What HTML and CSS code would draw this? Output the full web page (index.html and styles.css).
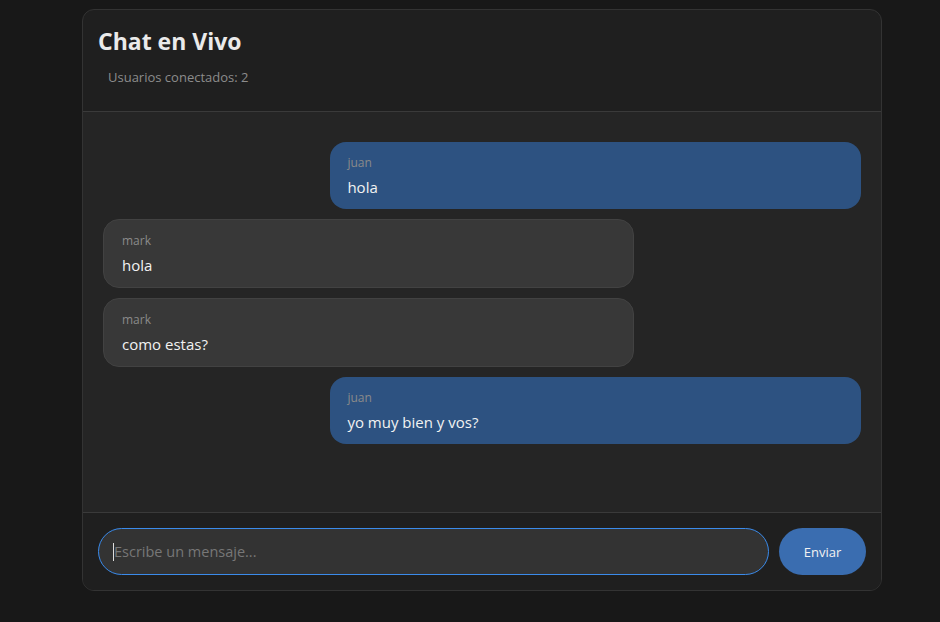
FILE: index.html
```html
<!DOCTYPE html>
<html lang="es">
<head>
<meta charset="utf-8">
<title>Chat en Vivo</title>
<link rel="stylesheet" href="styles.css">
</head>
<body>
<div class="chat">
  <header class="chat-header">
    <h2 class="chat-title">Chat en Vivo</h2>
    <div class="chat-users">Usuarios conectados: 2</div>
  </header>
  <main class="messages">
    <div class="msg own"><div class="msg-user">juan</div><div class="msg-text">hola</div></div>
    <div class="msg other"><div class="msg-user">mark</div><div class="msg-text">hola</div></div>
    <div class="msg other"><div class="msg-user">mark</div><div class="msg-text">como estas?</div></div>
    <div class="msg own"><div class="msg-user">juan</div><div class="msg-text">yo muy bien y vos?</div></div>
  </main>
  <form class="composer">
    <div class="input"><span class="caret"></span><span class="placeholder">Escribe un mensaje...</span></div>
    <button type="button" class="send">Enviar</button>
  </form>
</div>
</body>
</html>
```
FILE: styles.css
```css
* { box-sizing: border-box; }
html, body { margin: 0; padding: 0; }
body {
  background: #181818;
  font-family: "Open Sans", "Noto Sans", sans-serif;
  color: #e6e6e6;
  width: 940px;
  height: 622px;
  overflow: hidden;
}
.chat {
  margin: 9px 0 0 82px;
  width: 800px;
  height: 582px;
  background: #1f1f1f;
  border: 1px solid #333;
  border-radius: 12px;
  display: flex;
  flex-direction: column;
  overflow: hidden;
}
.chat-header {
  height: 102px;
  padding: 16px 15px 0;
  border-bottom: 1px solid #3a3a3a;
}
.chat-title {
  margin: 0;
  font-size: 23px;
  line-height: 30px;
  font-weight: 700;
  color: #eaeaea;
}
.chat-users {
  margin-top: 12px;
  padding: 0 10px;
  font-size: 13px;
  line-height: 18px;
  color: #8c8c8c;
}
.messages {
  flex: 1;
  background: #252525;
  padding: 30px 20px 20px;
  display: flex;
  flex-direction: column;
  gap: 10px;
}
.msg {
  width: 70%;
  padding: 13px 18px 11px;
  border-radius: 16px;
}
.msg.own {
  align-self: flex-end;
  background: #2d5281;
  padding-left: 17px;
}
.msg.other {
  align-self: flex-start;
  background: #383838;
  border: 1px solid #424242;
}
.msg-user {
  font-size: 12px;
  line-height: 16px;
  color: #8a8a8a;
  margin-bottom: 5px;
}
.msg-text {
  font-size: 15px;
  line-height: 22px;
  color: #f2f2f2;
}
.composer {
  margin: 0;
  border-top: 1px solid #3a3a3a;
  padding: 15px;
  display: flex;
  gap: 10px;
  background: #1f1f1f;
}
.input {
  flex: 1;
  height: 47px;
  background: #333;
  border: 1px solid #3b8beb;
  border-radius: 24px;
  display: flex;
  align-items: center;
  padding: 0 14px;
}
.caret {
  width: 1px;
  height: 18px;
  background: #ddd;
}
.placeholder {
  font-size: 14.5px;
  color: #777;
}
.send {
  width: 87px;
  height: 47px;
  border: none;
  border-radius: 24px;
  background: #3a6db0;
  color: #f2f2f2;
  font-family: inherit;
  font-size: 13px;
  padding: 0;
}
```
